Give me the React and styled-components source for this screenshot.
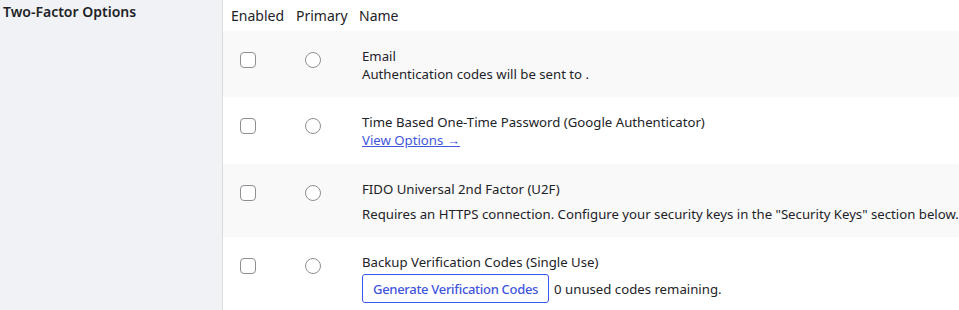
import React from "react";
import styled, { createGlobalStyle } from "styled-components";

const options = [
  {
    id: "email",
    title: "Email",
    detail: "Authentication codes will be sent to .",
    kind: "text",
  },
  {
    id: "totp",
    title: "Time Based One-Time Password (Google Authenticator)",
    detail: "View Options →",
    kind: "link",
  },
  {
    id: "u2f",
    title: "FIDO Universal 2nd Factor (U2F)",
    detail:
      'Requires an HTTPS connection. Configure your security keys in the "Security Keys" section below.',
    kind: "note",
  },
  {
    id: "backup",
    title: "Backup Verification Codes (Single Use)",
    detail: "0 unused codes remaining.",
    kind: "button",
  },
];

const App = () => {
  return (
    <>
      <GlobalStyle />
      <Page>
        <Label>Two-Factor Options</Label>
        <Table>
          <HeadRow>
            <HeadCell>Enabled</HeadCell>
            <HeadCell>Primary</HeadCell>
            <HeadCell>Name</HeadCell>
          </HeadRow>
          {options.map((opt, i) => (
            <Row key={opt.id} $striped={i % 2 === 0}>
              <ControlCell>
                <Checkbox type="checkbox" />
              </ControlCell>
              <ControlCell>
                <Radio type="radio" name="primary" />
              </ControlCell>
              <NameCell>
                <Title>{opt.title}</Title>
                {opt.kind === "text" && <Detail>{opt.detail}</Detail>}
                {opt.kind === "link" && <Link href="#">{opt.detail}</Link>}
                {opt.kind === "note" && <Note>{opt.detail}</Note>}
                {opt.kind === "button" && (
                  <Actions>
                    <Button type="button">Generate Verification Codes</Button>
                    <span>{opt.detail}</span>
                  </Actions>
                )}
              </NameCell>
            </Row>
          ))}
        </Table>
      </Page>
    </>
  );
};

const GlobalStyle = createGlobalStyle`
  body {
    margin: 0;
    background: #ffffff;
    font-family: "Noto Sans", "Open Sans", sans-serif;
    color: #1d2327;
  }
`;

const Page = styled.div`
  display: flex;
  width: 959px;
  height: 310px;
  overflow: hidden;
`;

const Label = styled.div`
  width: 219px;
  flex-shrink: 0;
  padding: 2px 0 0 3px;
  background: #f1f2f6;
  border-right: 1px solid #dcdcde;
  font-size: 14px;
  font-weight: 600;
  line-height: 20px;
  color: #1d2327;
`;

const Table = styled.div`
  flex: 1;
  display: flex;
  flex-direction: column;
  min-width: 0;
`;

const HeadRow = styled.div`
  display: grid;
  grid-template-columns: 65px 63px 1fr;
  height: 31px;
  flex-shrink: 0;
  align-items: center;
  background: #ffffff;
`;

const HeadCell = styled.div`
  padding-left: 8px;
  font-size: 14px;
  line-height: 19px;
  color: #1d2327;
  padding-bottom: 1px;
`;

const Row = styled.div`
  display: grid;
  grid-template-columns: 65px 63px 1fr;
  align-items: start;
  flex-shrink: 0;
  padding: 16px 0 14px;
  background: ${(p) => (p.$striped ? "#f9f9f9" : "#ffffff")};
  font-size: 13.2px;
  line-height: 18px;
`;

const ControlCell = styled.div`
  padding: 5px 0 0 17px;
  display: flex;
`;

const Checkbox = styled.input`
  appearance: none;
  margin: 0;
  width: 16px;
  height: 16px;
  border: 1px solid #8c8f94;
  border-radius: 4px;
  background: #ffffff;
`;

const Radio = styled(Checkbox)`
  border-radius: 50%;
`;

const NameCell = styled.div`
  padding-left: 11px;
  white-space: nowrap;
`;

const Title = styled.div`
  color: #1d2327;
`;

const Detail = styled.div`
  color: #1d2327;
`;

const Note = styled.p`
  margin: 7px 0 0;
  color: #1d2327;
`;

const Link = styled.a`
  display: block;
  line-height: 19px;
  color: #4356dc;
  text-decoration: underline;
`;

const Actions = styled.div`
  display: flex;
  align-items: center;
  gap: 5px;
  margin-top: 3px;
`;

const Button = styled.button`
  height: 29px;
  padding: 0 10px;
  border: 1px solid #3858e9;
  border-radius: 3px;
  background: #ffffff;
  color: #3f55dc;
  font-family: inherit;
  font-size: 13px;
  font-weight: 500;
  letter-spacing: -0.3px;
`;

export default App;
